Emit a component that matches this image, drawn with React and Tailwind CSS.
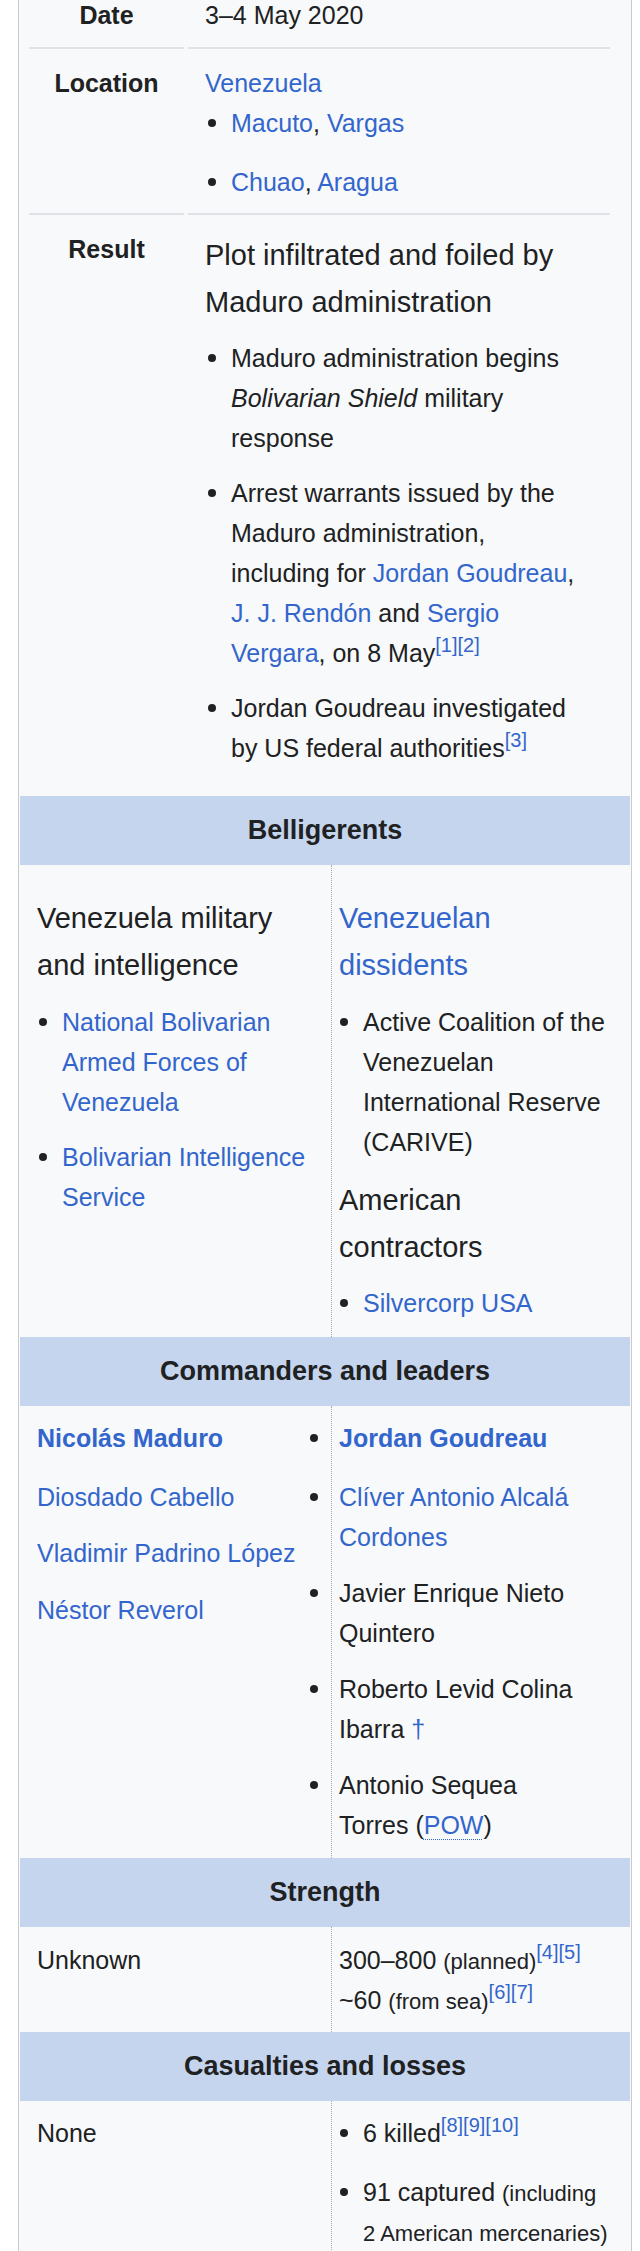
import React from "react";

function A({ children, className = "" }) {
  return <span className={"text-[#3366cc] " + className}>{children}</span>;
}

function Ref({ n }) {
  return <sup className="text-[20px] text-[#3366cc]">[{n}]</sup>;
}

function Small({ children }) {
  return <span className="text-[22px] leading-none">{children}</span>;
}

// bullet row: col sets width of the marker column and the dot offset
function Li({ col, className = "", children }) {
  return (
    <div className={"flex " + className}>
      <div className={col + " shrink-0 pt-[16px]"}>
        <div className="h-[8px] w-[8px] rounded-full bg-[#202122]" />
      </div>
      <div className="min-w-0">{children}</div>
    </div>
  );
}

function Band({ children }) {
  return (
    <div className="bg-[#c5d5ed] py-[13px] text-center text-[27px] font-bold leading-[43px]">
      {children}
    </div>
  );
}

function Split({ left, right, top, bottom }) {
  return (
    <div className="flex">
      <div className={"w-[311px] shrink-0 pl-[17px] " + top}>{left}</div>
      <div className={"flex-1 border-l border-dotted border-[#a2a9b1] pl-[7px] " + top + " " + bottom}>
        {right}
      </div>
    </div>
  );
}

export default function App() {
  const top = "w-[26px] pl-[3px]";
  const colL = "w-[25px] pl-[2px]";
  const colR = "w-[24px] pl-[1px]";

  return (
    <div className="h-[2251px] overflow-hidden bg-white font-['Liberation_Sans',Arial,sans-serif] text-[25px] leading-[40px] text-[#202122]">
      <div className="-mt-[6px] ml-[18px] w-[614px] border-x border-[#c8ccd1] bg-[#f8f9fa] p-px">
        {/* date / location / result */}
        <div className="flex gap-[4px] pl-[9px]">
          <div className="w-[155px] shrink-0 pb-[12px] text-center font-bold">Date</div>
          <div className="w-[422px] pb-[12px] pl-[17px]">3–4 May 2020</div>
        </div>
        <div className="flex gap-[4px] pl-[9px]">
          <div className="w-[155px] shrink-0 border-t-2 border-[#dfe2e6] pb-[11px] pt-[14px] text-center font-bold">
            Location
          </div>
          <div className="w-[422px] border-t-2 border-[#dfe2e6] pb-[11px] pl-[17px] pt-[14px]">
            <A>Venezuela</A>
            <Li col={top}>
              <A>Macuto</A>, <A>Vargas</A>
            </Li>
            <Li col={top} className="mt-[19px]">
              <A>Chuao</A>, <A>Aragua</A>
            </Li>
          </div>
        </div>
        <div className="flex gap-[4px] pl-[9px]">
          <div className="w-[155px] shrink-0 border-t-2 border-[#dfe2e6] pb-[28px] pt-[14px] text-center font-bold">
            Result
          </div>
          <div className="w-[422px] border-t-2 border-[#dfe2e6] pb-[28px] pl-[17px] pt-[14px]">
            <div className="mt-[3px] text-[29px] leading-[47px]">
              Plot infiltrated and foiled by
              <br />
              Maduro administration
            </div>
            <Li col={top} className="mt-[12px]">
              Maduro administration begins
              <br />
              <i>Bolivarian Shield</i> military
              <br />
              response
            </Li>
            <Li col={top} className="mt-[15px]">
              Arrest warrants issued by the
              <br />
              Maduro administration,
              <br />
              including for <A>Jordan Goudreau</A>,
              <br />
              <A>J. J. Rendón</A> and <A>Sergio</A>
              <br />
              <A>Vergara</A>, on 8 May
              <Ref n="1" />
              <Ref n="2" />
            </Li>
            <Li col={top} className="mt-[15px]">
              Jordan Goudreau investigated
              <br />
              by US federal authorities
              <Ref n="3" />
            </Li>
          </div>
        </div>

        <Band>Belligerents</Band>
        <Split
          top="pt-[29.5px]"
          bottom="pb-[14px]"
          left={
            <>
              <div className="text-[29px] leading-[47px]">
                Venezuela military
                <br />
                and intelligence
              </div>
              <Li col={colL} className="mt-[13.5px]">
                <A>
                  National Bolivarian
                  <br />
                  Armed Forces of
                  <br />
                  Venezuela
                </A>
              </Li>
              <Li col={colL} className="mt-[15px]">
                <A>
                  Bolivarian Intelligence
                  <br />
                  Service
                </A>
              </Li>
            </>
          }
          right={
            <>
              <div className="text-[29px] leading-[47px]">
                <A>
                  Venezuelan
                  <br />
                  dissidents
                </A>
              </div>
              <Li col={colR} className="mt-[13.5px]">
                Active Coalition of the
                <br />
                Venezuelan
                <br />
                International Reserve
                <br />
                (CARIVE)
              </Li>
              <div className="mt-[14.5px] text-[29px] leading-[47px]">
                American
                <br />
                contractors
              </div>
              <Li col={colR} className="mt-[12.5px]">
                <A>Silvercorp USA</A>
              </Li>
            </>
          }
        />

        <Band>Commanders and leaders</Band>
        <Split
          top="pt-[12px]"
          bottom="pb-[13px]"
          left={
            <>
              <div className="font-bold">
                <A>Nicolás Maduro</A>
              </div>
              <div className="mt-[19px]">
                <A>Diosdado Cabello</A>
              </div>
              <div className="mt-[16px]">
                <A>Vladimir Padrino López</A>
              </div>
              <div className="mt-[17px]">
                <A>Néstor Reverol</A>
              </div>
            </>
          }
          right={
            <>
              <Li col="w-[31px] pl-[2px]" className="-ml-[31px] font-bold">
                <A>Jordan Goudreau</A>
              </Li>
              <Li col="w-[31px] pl-[2px]" className="-ml-[31px] mt-[19px]">
                <A>
                  Clíver Antonio Alcalá
                  <br />
                  Cordones
                </A>
              </Li>
              <Li col="w-[31px] pl-[2px]" className="-ml-[31px] mt-[16px]">
                Javier Enrique Nieto
                <br />
                Quintero
              </Li>
              <Li col="w-[31px] pl-[2px]" className="-ml-[31px] mt-[16px]">
                Roberto Levid Colina
                <br />
                Ibarra <A>†</A>
              </Li>
              <Li col="w-[31px] pl-[2px]" className="-ml-[31px] mt-[16px]">
                Antonio Sequea
                <br />
                Torres (<A className="underline decoration-dotted decoration-1 underline-offset-[5px]">POW</A>)
              </Li>
            </>
          }
        />

        <Band>Strength</Band>
        <Split
          top="pt-[13px]"
          bottom="pb-[12px]"
          left={<div>Unknown</div>}
          right={
            <>
              <div>
                300–800 <Small>(planned)</Small>
                <Ref n="4" />
                <Ref n="5" />
              </div>
              <div>
                ~60 <Small>(from sea)</Small>
                <Ref n="6" />
                <Ref n="7" />
              </div>
            </>
          }
        />

        <Band>Casualties and losses</Band>
        <Split
          top="pt-[12px]"
          bottom="pb-[12px]"
          left={<div>None</div>}
          right={
            <>
              <Li col={colR}>
                6 killed
                <Ref n="8" />
                <Ref n="9" />
                <Ref n="10" />
              </Li>
              <Li col={colR} className="mt-[19px]">
                91 captured <Small>(including</Small>
                <br />
                <Small>2 American mercenaries)</Small>
              </Li>
            </>
          }
        />
      </div>
    </div>
  );
}
